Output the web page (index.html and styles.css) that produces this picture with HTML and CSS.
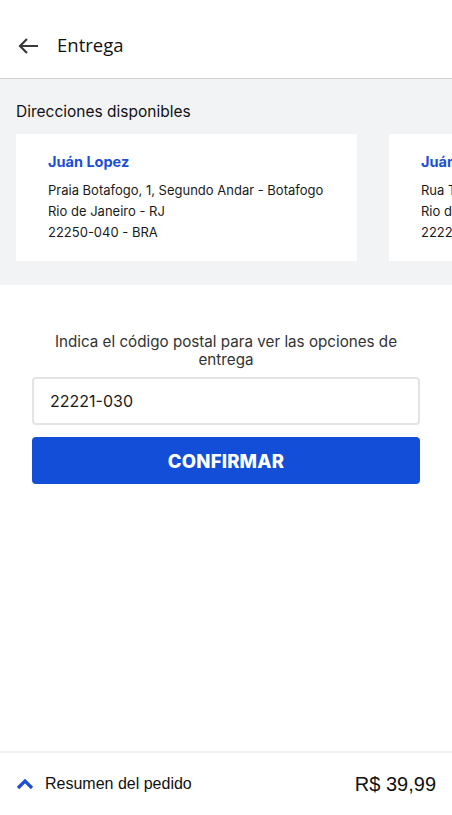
FILE: index.html
```html
<!DOCTYPE html>
<html lang="es">
<head>
<meta charset="utf-8">
<title>Entrega</title>
<link rel="stylesheet" href="styles.css">
</head>
<body>
<div class="page">
  <header class="header">
    <svg class="back" width="22" height="18" viewBox="0 0 22 18" aria-hidden="true">
      <path d="M21 9H3M10 2L3 9l7 7" fill="none" stroke="#3a3a3a" stroke-width="2.2"/>
    </svg>
    <h1 class="title">Entrega</h1>
  </header>

  <section class="addresses">
    <h2 class="addresses-title">Direcciones disponibles</h2>
    <div class="cards">
      <div class="card">
        <div class="card-name">Juán Lopez</div>
        <div class="card-line">Praia Botafogo, 1, Segundo Andar - Botafogo</div>
        <div class="card-line">Rio de Janeiro - RJ</div>
        <div class="card-line">22250-040 - BRA</div>
      </div>
      <div class="card">
        <div class="card-name">Juán Lopez</div>
        <div class="card-line">Rua Tonelero, 10 - Copacabana</div>
        <div class="card-line">Rio de Janeiro - RJ</div>
        <div class="card-line">22221-030 - BRA</div>
      </div>
    </div>
  </section>

  <section class="postal">
    <p class="postal-label">Indica el código postal para ver las opciones de entrega</p>
    <div class="postal-input">22221-030</div>
    <button class="confirm">CONFIRMAR</button>
  </section>

  <div class="spacer"></div>

  <footer class="footer">
    <svg class="chevron" width="18" height="12" viewBox="0 0 18 12" aria-hidden="true">
      <path d="M2 10L9 3l7 7" fill="none" stroke="#1a4fd6" stroke-width="3.2"/>
    </svg>
    <span class="summary">Resumen del pedido</span>
    <span class="price">R$ 39,99</span>
  </footer>
</div>
</body>
</html>
```

FILE: styles.css
```css
* { box-sizing: border-box; }
html, body { margin: 0; padding: 0; background: #fff; }
body { font-family: "Open Sans", "Liberation Sans", sans-serif; color: #1a1a1a; }

.page {
  width: 452px;
  height: 815px;
  display: flex;
  flex-direction: column;
  overflow: hidden;
}

.header {
  height: 79px;
  flex: none;
  display: flex;
  align-items: center;
  padding: 12px 0 0 17px;
  border-bottom: 1px solid #cfcfcf;
}
.back { margin-top: 1px; }
.title {
  margin: 0 0 0 18px;
  font-family: "Open Sans", sans-serif;
  font-size: 18.5px;
  font-weight: 400;
  color: #111;
  padding-bottom: 2px;
}

.addresses {
  background: #f2f3f5;
  height: 206px;
  flex: none;
  padding: 23px 0 0 16px;
  overflow: hidden;
}
.addresses-title {
  margin: 0;
  font-family: "Inter", "Noto Sans", sans-serif;
  font-size: 15.5px;
  font-weight: 400;
  color: #111;
  line-height: 20px;
}
.cards {
  display: flex;
  gap: 32px;
  margin-top: 12px;
}
.card {
  flex: none;
  width: 341px;
  height: 127px;
  background: #fff;
  padding: 18px 0 0 32px;
  font-family: "Inter", "Noto Sans", sans-serif;
  white-space: nowrap;
  overflow: hidden;
}
.card-name {
  color: #1a4fd6;
  font-weight: 700;
  font-size: 14.5px;
  line-height: 20px;
  margin-bottom: 8px;
}
.card-line {
  font-size: 13px;
  line-height: 21px;
  color: #1a1a1a;
}

.postal {
  padding: 48px 32px 0 32px;
  flex: none;
}
.postal-label {
  margin: 0;
  text-align: center;
  font-family: "Inter", "Noto Sans", sans-serif;
  font-size: 15.2px;
  line-height: 18px;
  color: #333;
  padding: 0 16px;
}
.postal-input {
  margin-top: 8px;
  height: 48px;
  border: 2px solid #e4e4e4;
  border-radius: 4px;
  padding: 0 0 0 16px;
  display: flex;
  align-items: center;
  font-family: "Inter", "Noto Sans", sans-serif;
  font-size: 16px;
  color: #1a1a1a;
}
.confirm {
  display: block;
  width: 100%;
  margin-top: 12px;
  height: 47px;
  border: none;
  border-radius: 4px;
  background: #134ed8;
  color: #fff;
  font-family: "Inter", "Noto Sans", sans-serif;
  font-size: 18.5px;
  font-weight: 800;
  letter-spacing: 0.2px;
}

.spacer { flex: 1; }

.footer {
  flex: none;
  height: 64px;
  border-top: 2px solid #f0f0f0;
  display: flex;
  align-items: center;
  padding: 0 16px 0 16px;
  font-family: "Liberation Sans", Arial, sans-serif;
}
.chevron { margin-right: 11px; }
.summary { font-size: 16px; color: #111; }
.price { margin-left: auto; font-size: 20px; color: #111; }
```
